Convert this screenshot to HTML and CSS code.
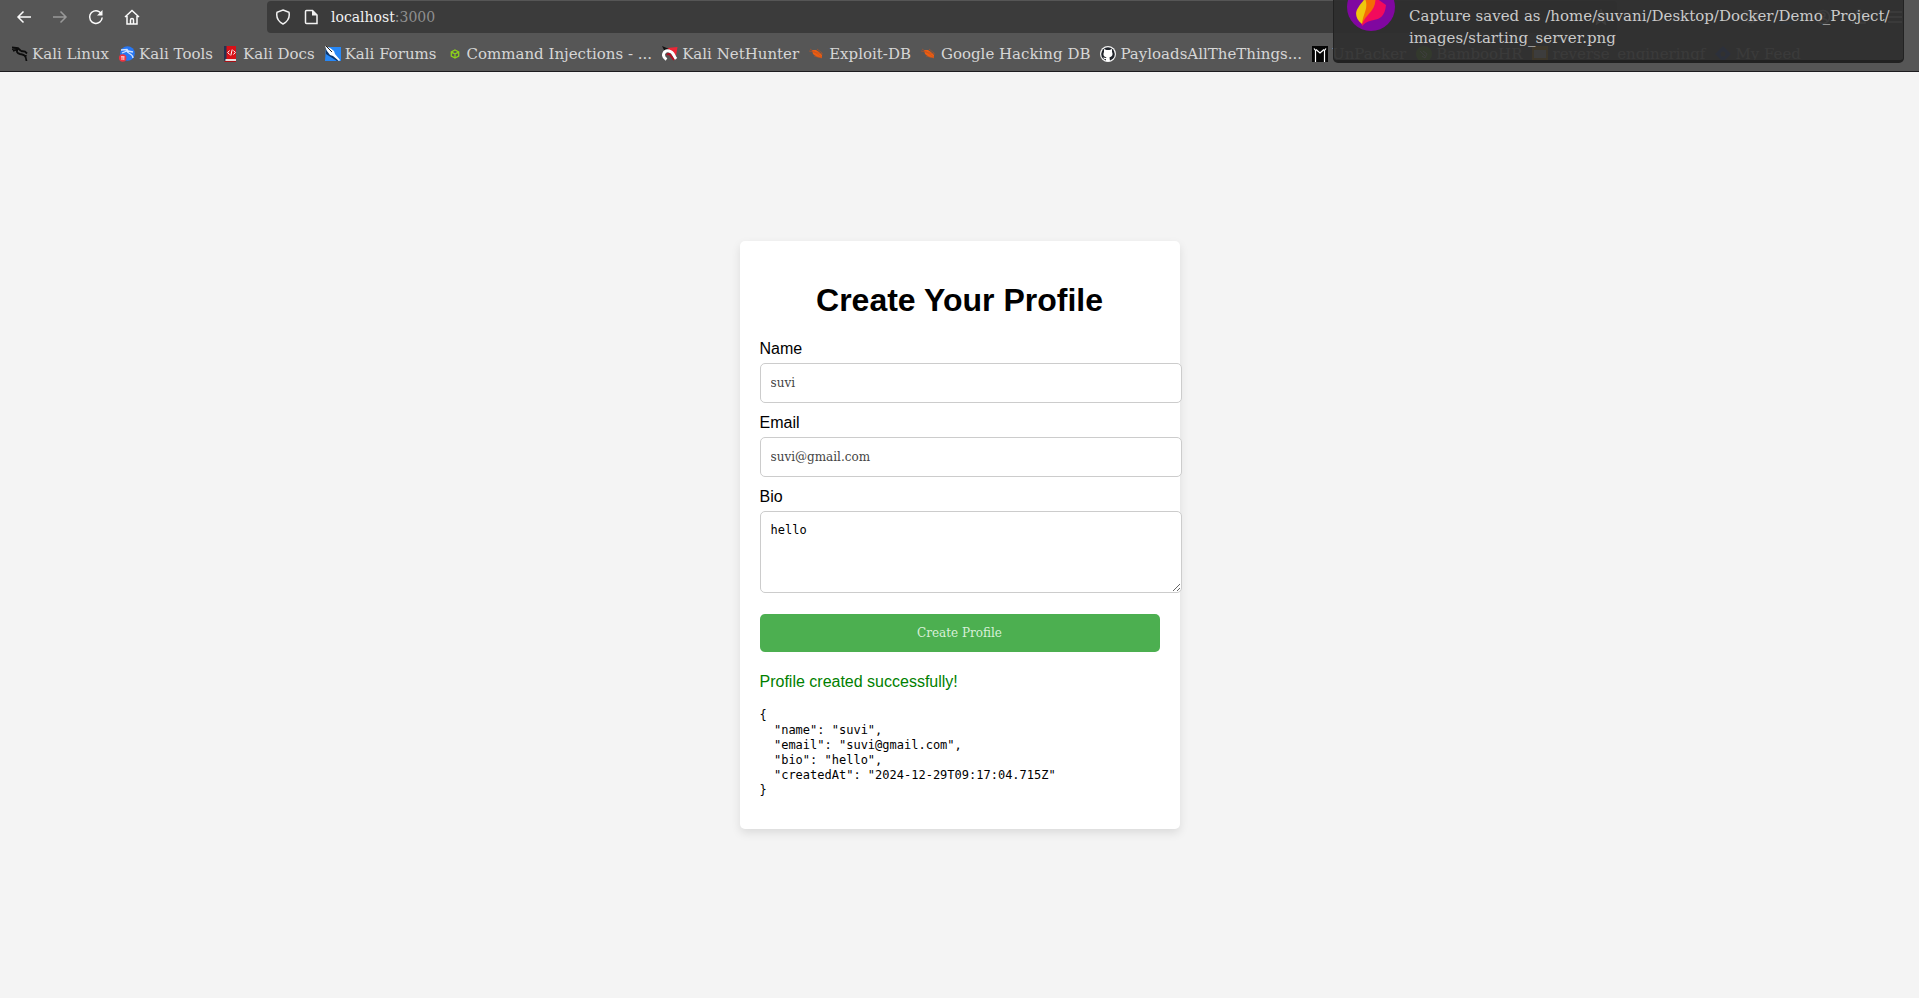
FILE: index.html
```html
<!DOCTYPE html>
<html lang="en">
<head>
<meta charset="utf-8">
<title>Create Your Profile</title>
<link rel="stylesheet" href="styles.css">
</head>
<body>
<header class="browser">
  <div class="toolbar">
    <nav class="nav" aria-label="Navigation">
      <button class="icon-btn" aria-label="Back"><svg viewBox="0 0 16 16"><path d="M15 8H2M7.500 2.500 2 8l5.500 5.500"/></svg></button>
      <button class="icon-btn dim" aria-label="Forward"><svg viewBox="0 0 16 16"><path d="M1 8h13M8.500 2.500 14 8l-5.500 5.500"/></svg></button>
      <button class="icon-btn" aria-label="Reload"><svg viewBox="0 0 16 16"><path d="M14.200 8.500A6.300 6.300 0 1 1 11 2.600L13 4"/><path class="solid" d="M14.500 1v5.500H9z"/></svg></button>
      <button class="icon-btn" aria-label="Home"><svg viewBox="0 0 16 16"><path d="M1 8l7-6.500L15 8M3 7v8h10V7M6.500 15v-4a1.500 1.500 0 0 1 3 0v4"/></svg></button>
    </nav>
    <div class="address">
      <svg class="glyph" viewBox="0 0 16 16"><path d="M8 1l6 2.300c.9 4.700-1.200 9.200-6 11.700C3.200 12.500 1.100 8 2 3.300z"/></svg>
      <svg class="glyph" viewBox="0 0 16 16"><path d="M3.500 1.500h6L14 6v8.500H3.500a1 1 0 0 1-1-1v-11a1 1 0 0 1 1-1z"/><path class="solid" d="M9 1v5.500h5z"/></svg>
      <span class="url">localhost<span class="port">:3000</span></span>
      <svg class="glyph star" viewBox="0 0 16 16"><path d="M8 1l2 4.600 5 .5-3.800 3.300L12.400 15 8 12l-4.400 3 1.200-5.600L1 6.100l5-.5z"/></svg>
    </div>
    <div class="tools">
      <button class="icon-btn" aria-label="Pocket"><svg viewBox="0 0 16 16"><path d="M1.500 2h13v5a6.500 6.500 0 0 1-13 0zM5 6l3 3 3-3"/></svg></button>
      <button class="icon-btn" aria-label="Downloads"><svg class="blue" viewBox="0 0 16 16"><path d="M8 1v9M4 6l4 4 4-4M2 14h12"/></svg></button>
      <button class="icon-btn" aria-label="Account"><svg viewBox="0 0 16 16"><circle cx="8" cy="8" r="6.500"/><circle cx="8" cy="6" r="2"/><path d="M4 12c1-3 7-3 8 0"/></svg></button>
      <button class="icon-btn" aria-label="Extensions"><svg viewBox="0 0 16 16"><path d="M2 5h4V3a2 2 0 0 1 4 0v2h4v9H2v-3h2a1.500 1.500 0 0 0 0-3H2z"/></svg></button>
      <button class="icon-btn" aria-label="Menu"><svg viewBox="0 0 16 16"><path d="M1 3h14M1 8h14M1 13h14"/></svg></button>
    </div>
  </div>
  <nav class="bookmarks" aria-label="Bookmarks">
    <a href="#"><svg viewBox="0 0 16 16"><g fill="none" stroke="#0c0c0c"><path stroke-width="1.800" d="M0 1.500l6 .5 3 3M1 5l4-1.500M6 2.500c-2 3-1 5 2 5.500 4 .5 6 1.500 6.500 7M9 5l4 .5 2 2"/><path d="M0 3.500l5-1M10 8.500l5 1.500"/></g></svg>Kali Linux</a>
    <a href="#"><svg viewBox="0 0 16 16"><circle cx="8.500" cy="7.500" r="7.300" fill="#2777f4"/><path d="M2 4l6-.5 2 2.500M3 7l5-2c0 3 6 2 6 7M9 5l5 1" fill="none" stroke="#cfe2ff" stroke-width="1.300"/><circle cx="3.700" cy="12" r="3.700" fill="#ee3440"/><path d="M2 10.700h3.500M3 11v3M4.800 11v3" stroke="#fff" stroke-width=".8"/></svg>Kali Tools</a>
    <a href="#"><svg viewBox="0 0 16 16"><path fill="#d81118" d="M1 0h12v13H1z"/><path fill="#243250" d="M1 0h2.500v13L1 15z"/><path fill="#e7dede" d="M2.500 13H13v2H2.500z"/><path d="M1.500 15.500H13" stroke="#a80f14"/><path d="M6.500 4.500 4.700 6.500l1.800 2M10.500 4.500l1.800 2-1.800 2M9.200 3.500 7.800 9.500" fill="none" stroke="#fff"/></svg>Kali Docs</a>
    <a href="#"><svg viewBox="0 0 16 16"><path fill="#2788f7" d="M1 1h15v14H0z"/><path fill="#0c376e" d="M1 4l13 10-2 1L1 8z"/><path fill="#fff" d="M0 0l5 2 4 3 1 3 5 6-1 1-6-5-3-1-3-4z"/><path d="M1 0l6 6" stroke="#222"/></svg>Kali Forums</a>
    <a href="#"><svg viewBox="0 0 16 16"><path d="M8 4l3.700 1.900v4.200L8 12l-3.700-1.900V5.900zM4.300 5.900 8 8l3.700-2.100M8 8v4" fill="none" stroke="#8ed21a" stroke-width="1.300"/></svg>Command Injections - ...</a>
    <a href="#"><svg viewBox="0 0 16 16"><path fill="#ed2636" d="M5 2l10.500-1L14 10 9 6z"/><path fill="#111" d="M0 0l7 3-4 3z"/><path d="M4.500 13.500C-1 10 2 4 7 5s4 4 7 8" fill="none" stroke="#fff" stroke-width="3"/><path d="M5 9c1-2 3-1 4 1l3 4" fill="none" stroke="#b20e21" stroke-width="2"/></svg>Kali NetHunter</a>
    <a href="#"><svg viewBox="0 0 16 16"><path fill="#ee5d10" d="M3 4l4 0 3 2 3 3v3l-5-1-4-3z"/><path d="M1 3l12 8M0 5l14 3M5 10l8 2M8 3l5 4" stroke="#bd5423" stroke-width=".6"/></svg>Exploit-DB</a>
    <a href="#"><svg viewBox="0 0 16 16"><path fill="#ee5d10" d="M3 4l4 0 3 2 3 3v3l-5-1-4-3z"/><path d="M1 3l12 8M0 5l14 3M5 10l8 2M8 3l5 4" stroke="#bd5423" stroke-width=".6"/></svg>Google Hacking DB</a>
    <a href="#"><svg viewBox="0 0 16 16"><circle cx="8" cy="8" r="8" fill="#f5f5f5"/><circle cx="8" cy="8" r="6.800" fill="#20242a"/><path fill="#fff" d="M4 3l2.500 1h3L12 3v3c1.500 3-.5 5-2.500 5.200l.5 4H6V13c-2 .5-2.500-.5-3-1.500l3 .4.500-.7C4 11 2.700 9 4 6z"/></svg>PayloadsAllTheThings...</a>
    <a href="#"><svg viewBox="0 0 16 16"><path fill="#050505" d="M0 0h16v16H0z"/><path d="M3.500 16V4.500L2 2.500M4 3.500 8 7l4-3.500M12.500 16V4.500L14 2.500" fill="none" stroke="#fff" stroke-width="1.200"/></svg>UnPacker</a>
    <a href="#"><svg viewBox="0 0 16 16"><circle cx="8" cy="8" r="8" fill="#73c41d"/><path d="M4 5l5 5M7 5l4 3-2 4-3-2" fill="none" stroke="#fff"/></svg>BambooHR</a>
    <a href="#"><svg viewBox="0 0 16 16"><path fill="#f5a400" d="M0 0h16v16H0z"/><path fill="#fff" d="M2 4h12v8H2z"/></svg>reverse_engineringf</a>
    <a href="#"><svg viewBox="0 0 16 16"><path fill="#1747d1" d="M8 0l8 8-8 8-8-8z"/><circle cx="8" cy="8" r="2.500" fill="#555"/></svg>My Feed</a>
  </nav>
  <div class="toast" role="status">
    <svg class="toast-logo" viewBox="0 0 48 48"><circle cx="24" cy="24" r="24" fill="#8007a0"/><path fill="#f20a5c" d="M39 22C38 34 32 36 27 37c-6 1-9 3-12 6-3-12 7-16 14-28z"/><path fill="#f46c05" d="M28 10c3 18-8 19-13 31C11 24 20 20 22 6z"/><path fill="#eec70d" d="M18 15c4 11-2 15-3 26-7-5-7-12-4-16 2-4 5-6 7-10z"/></svg>
    <p class="toast-text">Capture saved as /home/suvani/Desktop/Docker/Demo_Project/<wbr>images/starting_server.png</p>
  </div>
</header>
<main class="page">
  <section class="card">
    <h1>Create Your Profile</h1>
    <form>
      <label for="name">Name</label>
      <input class="field" id="name" type="text" value="suvi">
      <label for="email">Email</label>
      <input class="field" id="email" type="email" value="suvi@gmail.com">
      <label for="bio">Bio</label>
      <textarea class="field bio" id="bio">hello</textarea>
      <button class="submit" type="button">Create Profile</button>
    </form>
    <p class="message">Profile created successfully!</p>
    <pre class="result">{
  "name": "suvi",
  "email": "suvi@gmail.com",
  "bio": "hello",
  "createdAt": "2024-12-29T09:17:04.715Z"
}</pre>
  </section>
</main>
</body>
</html>
```
FILE: styles.css
```css
* { box-sizing: border-box; }

body {
  margin: 0;
  min-height: 100vh;
  display: flex;
  flex-direction: column;
  background: #f4f4f4;
  color: #000;
  font: 16px/19px "Liberation Sans", Arial, sans-serif;
}

.browser {
  position: relative;
  background: #565656;
  border-bottom: 1px solid #1c1b1e;
  color: #d6d6d6;
  font: 15px/20px "DejaVu Serif", serif;
  overflow: hidden;
}

.toolbar {
  display: flex;
  align-items: center;
  padding-top: 1px;
}

.nav {
  display: flex;
  gap: 20px;
  width: 267px;
  padding-left: 16px;
}

.icon-btn {
  display: flex;
  padding: 0;
  border: 0;
  background: none;
  color: #fbfbfb;
}

.dim { color: #999; }

.icon-btn svg,
.glyph {
  width: 16px;
  height: 16px;
  fill: none;
  stroke: currentColor;
  stroke-width: 1.5;
}

.icon-btn .solid,
.glyph .solid { fill: currentColor; stroke: none; }

.icon-btn .blue { color: #2a74e8; }

.address {
  flex: 1;
  display: flex;
  align-items: center;
  gap: 12px;
  height: 32px;
  padding: 0 8px;
  border-radius: 4px;
  background: #3b3b3b;
  color: #f2f2f2;
}

.url {
  flex: 1;
  font-size: 14px;
}

.port { color: #8f8f8f; }

.tools {
  display: flex;
  justify-content: flex-end;
  gap: 20px;
  width: 302px;
  padding-right: 16px;
}

.bookmarks {
  display: flex;
  align-items: center;
  gap: 10px;
  height: 38px;
  padding: 4px 12px 0;
  white-space: nowrap;
}

.bookmarks a {
  display: flex;
  align-items: center;
  gap: 4px;
  color: inherit;
  text-decoration: none;
}

.bookmarks svg {
  width: 16px;
  height: 16px;
  flex: none;
}

.toast {
  position: absolute;
  top: 0;
  right: 15px;
  display: flex;
  gap: 14px;
  width: 571px;
  height: 63px;
  padding: 5px 4px 0 13px;
  border: 1px solid #222;
  border-top: 0;
  border-bottom-width: 3px;
  border-radius: 0 0 5px 5px;
  background: rgba(46, 46, 46, 0.93);
  color: #cacaca;
}

.toast-logo {
  flex: none;
  width: 48px;
  height: 48px;
  margin-top: -22px;
}

.toast-text {
  margin: 0;
  line-height: 22px;
}

.page {
  flex: 1;
  display: flex;
  align-items: center;
  justify-content: center;
}

.card {
  width: 440px;
  padding: 20px;
  border-radius: 5px;
  background: #fff;
  box-shadow: 0 4px 10px rgba(0, 0, 0, 0.1);
}

h1 {
  margin: 21px 0;
  font-size: 32px;
  line-height: 36px;
  text-align: center;
}

label { display: block; }

.field {
  display: block;
  width: calc(100% + 22px);
  height: 40px;
  margin: 5px 0 10px;
  padding: 10px;
  border: 1px solid #ccc;
  border-radius: 5px;
  background: #fff;
  color: #444;
  font: 12px/18px "DejaVu Serif", serif;
}

.bio {
  height: 82px;
  margin-bottom: 21px;
  padding-top: 11px;
  color: #000;
  font: 12px/15px "DejaVu Sans Mono", monospace;
  resize: vertical;
}

.submit {
  display: block;
  width: 100%;
  height: 38px;
  border: 0;
  border-radius: 5px;
  background: #4caf50;
  color: #d8efd9;
  font: 12px/18px "DejaVu Serif", serif;
}

.message {
  margin: 20px 0 17px;
  color: green;
}

.result {
  margin: 0 0 11px;
  font: 12px/15px "DejaVu Sans Mono", monospace;
}
```
